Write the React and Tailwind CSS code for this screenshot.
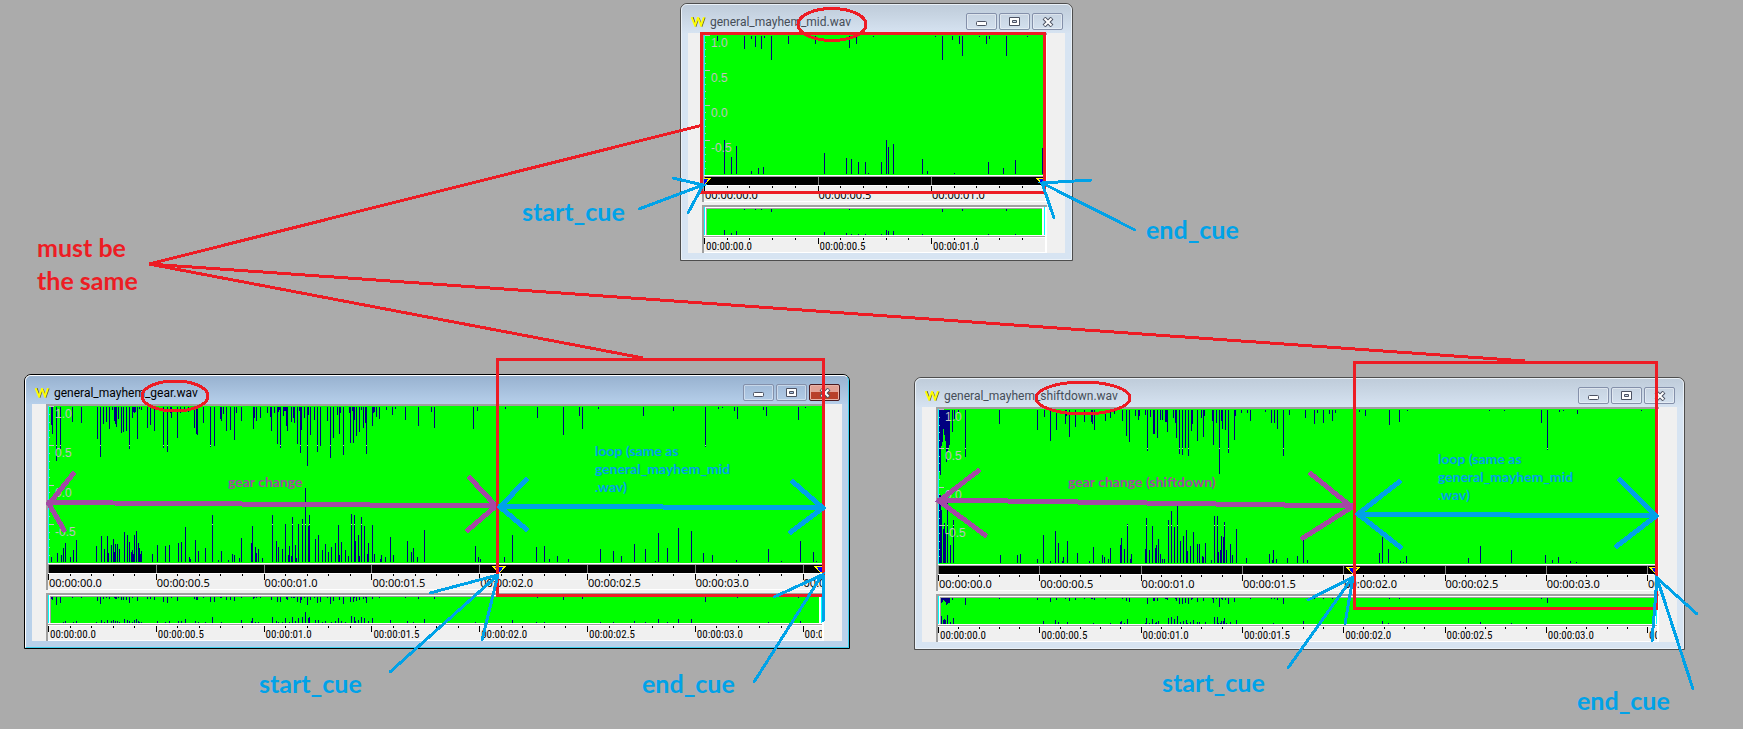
const midWave = {
  top: "13,5 40,13 47,3 51,11 57,13 60,2 67,24 84,8 111,8 145,12 152,8 169,1 231,1 238,24 248,4 255,8 258,20 275,1 282,8 285,3 302,20 323,1",
  bottom:
    "20,34 27,17 32,28 47,3 54,6 59,7 120,21 142,16 147,15 154,12 161,12 164,1 177,12 182,34 184,27 189,30 218,15 223,3 250,1 284,12 299,6 311,14 338,26",
};

const gearWave = {
  top: "3,18 4,27 8,54 12,42 24,15 33,16 49,32 52,50 55,17 58,15 61,22 64,3 66,14 67,17 68,20 70,12 73,26 75,25 78,24 81,42 84,11 85,5 86,6 87,5 89,32 91,2 93,3 99,21 102,18 106,24 109,3 115,41 119,45 122,6 123,11 129,31 132,6 136,4 140,5 146,21 148,27 149,28 155,16 162,40 166,39 172,12 173,14 175,7 178,24 182,23 186,33 188,6 193,14 205,22 206,11 208,14 212,11 219,6 222,10 223,24 226,6 229,37 230,5 231,3 232,41 235,9 236,4 237,4 238,19 239,24 243,15 245,11 246,16 249,37 251,4 252,46 253,23 256,11 259,59 260,8 262,28 266,13 269,45 272,39 279,14 282,51 285,31 289,8 291,27 292,6 295,48 301,6 302,36 304,4 305,36 306,13 308,29 311,25 313,3 315,21 317,16 318,47 324,19 325,6 326,5 328,10 331,12 338,3 344,8 347,2 357,13 370,19 383,5 386,21 425,22 429,4 457,2 489,11 515,28 531,9 534,22 550,2 595,9 625,4 657,40 670,2 674,1 686,4 689,12 715,3 718,9 750,13 757,1",
  bottom:
    "3,5 9,9 13,7 15,14 17,19 22,5 25,12 28,22 48,16 53,26 56,13 59,26 60,9 63,17 65,23 66,10 67,18 69,18 71,13 76,30 79,27 81,20 83,10 84,12 85,8 86,27 88,31 90,19 91,14 92,8 93,11 104,8 109,17 117,16 121,17 130,19 133,20 137,35 141,5 142,3 147,22 150,11 157,14 164,47 170,2 173,11 180,2 184,8 186,7 191,4 193,24 203,19 204,36 207,15 208,9 210,13 214,4 224,47 228,21 230,15 234,13 237,38 240,7 241,16 243,6 244,45 247,17 248,4 250,38 254,43 257,74 260,36 261,47 267,23 270,27 274,12 277,18 280,10 283,15 287,19 290,37 291,7 293,20 297,12 300,6 303,48 306,47 307,21 310,27 311,6 313,45 316,36 319,8 320,19 324,37 326,8 332,3 333,7 337,5 342,25 345,7 359,21 363,10 365,14 369,5 376,32 427,16 430,5 432,3 456,5 464,27 488,15 496,16 501,3 509,6 520,3 552,13 565,11 573,6 586,18 597,13 607,1 610,29 619,14 630,34 643,31 655,9 664,7 688,2 720,13 733,1 752,21 765,10 768,1",
};

const shiftWave = {
  top: "1,61 2,65 3,36 4,32 5,19 6,25 7,31 8,52 9,42 10,39 11,35 14,22 16,9 20,2 27,47 61,14 99,20 106,7 112,31 118,20 127,14 128,6 131,27 137,17 146,12 153,12 154,14 156,20 167,11 172,8 176,4 184,11 188,26 191,32 197,6 200,10 201,6 207,5 209,41 212,7 215,24 216,24 219,28 222,10 224,10 227,12 228,12 229,22 235,8 237,13 238,28 241,44 244,45 247,38 250,46 253,21 254,14 259,31 263,8 265,27 266,6 274,11 275,35 278,13 281,64 283,11 284,19 287,20 290,43 296,30 297,6 303,3 309,3 312,11 327,2 333,13 336,13 339,19 345,46 351,5 367,8 376,14 379,3 385,13 391,4 394,11 397,3 421,2 427,6 451,15 461,12 469,1 551,1 566,1 603,13 609,40 621,2 625,1 639,4 703,1",
  bottom:
    "1,68 2,68 3,53 5,34 6,40 7,30 9,62 12,18 15,43 62,8 79,8 82,9 99,4 105,28 112,2 117,32 120,20 124,2 125,6 129,22 139,10 151,2 155,16 164,8 166,6 170,4 172,15 182,18 183,25 186,14 189,39 192,4 193,9 207,14 208,45 211,13 214,37 217,15 218,18 220,24 222,9 224,4 226,4 230,43 233,52 236,36 239,57 242,22 245,27 248,33 249,12 252,17 255,31 259,19 261,19 264,7 265,6 267,20 273,3 276,47 279,47 280,11 282,13 283,27 285,26 286,41 288,13 292,19 294,8 298,34 308,5 331,9 334,3 335,13 338,4 349,5 359,7 365,24 369,3 441,10 444,26 450,14 462,2 465,1 468,7 530,5 542,17 573,13 607,8 614,3 620,6 632,2 638,1",
};

const parse = (list) => list.split(" ").map((pair) => pair.split(",").map(Number));

function Spikes({ wave, height, scale = 1, shift = 0 }) {
  const bars = [];
  const full = scale === 1;
  const size = (n) => (full ? n : Math.max(0, Math.floor(n * scale - 0.8)));
  const inset = full ? 1 : 0;
  parse(wave.top).forEach(([x, n]) => bars.push([x - shift, inset, size(n)]));
  parse(wave.bottom).forEach(([x, n]) =>
    bars.push([x - shift, height - size(n) - inset, size(n)])
  );
  return (
    <g fill="#000080">
      {bars.map(([x, y, h], i) => (
        <rect key={i} x={x} y={y} width="1" height={h} />
      ))}
    </g>
  );
}

function WaveView({ wave, height }) {
  const step = height / 4;
  const minors = Array.from({ length: 20 }, (_, i) => i);
  return (
    <div className="grid bg-[#00ff00]">
      <svg
        className="col-start-1 row-start-1 block w-full"
        height={height}
        shapeRendering="crispEdges"
        aria-hidden="true"
      >
        <Spikes wave={wave} height={height} />
        <rect x="0" y="0" width="1" height={height} fill="#00ffff" />
        {minors.map((i) => (
          <rect
            key={i}
            x="1"
            y={Math.round((i * step) / 5)}
            width={i % 5 === 0 ? 5 : 1}
            height="1"
            fill="#c0c0c0"
          />
        ))}
        {parse(wave.top)
          .filter(([, n]) => n >= step)
          .map(([x]) => (
            <rect key={"t" + x} x={x} y={Math.round(step)} width="1" height="1" fill="#c0c0c0" />
          ))}
        {parse(wave.bottom)
          .filter(([, n]) => n >= step)
          .map(([x]) => (
            <rect key={"b" + x} x={x} y={Math.round(step * 3)} width="1" height="1" fill="#c0c0c0" />
          ))}
      </svg>
      <ol className="col-start-1 row-start-1 grid grid-rows-4 pl-[7px] font-['Liberation_Sans'] text-xs leading-4 text-[#c0c0c0]">
        <li>1.0</li>
        <li>0.5</li>
        <li>0.0</li>
        <li>-0.5</li>
      </ol>
    </div>
  );
}

function CueBar({ step, cues }) {
  return (
    <svg className="block h-2 w-full bg-black" shapeRendering="crispEdges" aria-hidden="true">
      {Array.from({ length: 8 }, (_, i) => (
        <rect key={i} x={Math.round(i * step)} y="0" width="1" height="8" fill="#808080" />
      ))}
      {cues.map((x) => (
        <path key={x} d={`M${x - 6} 1.5H${x + 6}L${x} 8Z`} fill="#0000ff" stroke="#ffff00" />
      ))}
    </svg>
  );
}

function Ruler({ step, labels, small }) {
  const ticks = Array.from({ length: 40 }, (_, i) => i);
  return (
    <div className={small ? "grid h-[14px] overflow-x-clip" : "grid h-[15px] overflow-x-clip"}>
      <svg className="col-start-1 row-start-1 block h-[7px] w-full" shapeRendering="crispEdges" aria-hidden="true">
        {ticks.map((i) => (
          <rect
            key={i}
            x={Math.round((i * step) / 5)}
            y="0"
            width="1"
            height={i % 5 === 0 ? 6 : 2}
            fill="#000"
          />
        ))}
      </svg>
      <ol
        className={
          small
            ? "col-start-1 row-start-1 flex min-w-0 pt-[3px] pl-[2px] font-['Roboto_Condensed','Roboto',sans-serif] text-[11px] leading-3 text-black"
            : "col-start-1 row-start-1 flex min-w-0 pt-[3px] pl-px font-['Noto_Sans',sans-serif] text-[11px] leading-3 text-black"
        }
      >
        {labels.map((label) => (
          <li key={label} className="shrink-0" style={{ width: step }}>
            {label}
          </li>
        ))}
      </ol>
    </div>
  );
}

function Overview({ wave, height }) {
  return (
    <div className="flex h-[28px] border-x border-[#00ffff] bg-white pl-px pr-[2px] pt-px">
      <div className="min-w-0 flex-1 border-l border-t border-[#a0a0a0] bg-[#00ff00]">
        <svg className="block h-[26px] w-full" shapeRendering="crispEdges" aria-hidden="true">
          <Spikes wave={wave} height={26} scale={26 / height} shift={3} />
        </svg>
      </div>
    </div>
  );
}

function TitleButton({ label, danger, children }) {
  return (
    <button
      type="button"
      aria-label={label}
      className={
        danger
          ? "flex h-[17px] w-[31px] items-center justify-center rounded-[2px] border border-[#4a1a20] bg-linear-to-b from-[#e2a195] from-50% to-[#b8402a] to-50% shadow-[inset_0_0_0_1px_#e8b3a8]"
          : "flex h-[17px] w-[31px] items-center justify-center rounded-[2px] border border-[#8490aa] shadow-[inset_0_0_0_1px_#ffffff66]"
      }
    >
      {children}
    </button>
  );
}

function TitleBar({ title, active }) {
  return (
    <header
      className={
        active
          ? "flex h-[28px] items-start rounded-t-[5px] bg-linear-to-b from-[#98b2d0] to-[#b6cfea] pl-[9px] pr-2 text-black"
          : "flex h-[28px] items-start rounded-t-[5px] bg-linear-to-b from-[#bfccda] to-[#d6e3f1] pl-[9px] pr-2 text-[#454d57]"
      }
    >
      <svg className="mt-3 block h-[10px] w-[15px]" viewBox="1 0 15 10" aria-hidden="true">
        <path d="M3 0L6 9L8.500 1.500M9 1L12 9L15 0.500" fill="none" stroke="#6b6b2e" strokeWidth="1.200" />
        <path d="M1.500 0L5 8.500L8 0.500L11 8.500L14 0" fill="none" stroke="#ffff00" strokeWidth="1.800" />
      </svg>
      <h2 className="mt-2 ml-1 flex-1 font-['Roboto',sans-serif] text-xs leading-[18px]">{title}</h2>
      <div className="mt-2 flex gap-[2px]">
        <TitleButton label="Minimize">
          <svg width="11" height="9" viewBox="0 0 11 9" aria-hidden="true">
            <rect x="0.5" y="4.5" width="10" height="4" rx="1" fill="#fff" stroke="#4c5262" />
          </svg>
        </TitleButton>
        <TitleButton label="Maximize">
          <svg width="11" height="9" viewBox="0 0 11 9" aria-hidden="true">
            <path d="M0.5 0.5H10.5V8.5H0.5Z M3.5 3.5V5.5H7.5V3.5Z" fillRule="evenodd" fill="#fff" stroke="#4c5262" />
          </svg>
        </TitleButton>
        <TitleButton label="Close" danger={active}>
          <svg width="12" height="10" viewBox="0 0 12 10" aria-hidden="true">
            <path d="M2 1L10 9M10 1L2 9" stroke="#4c5262" strokeWidth="4" />
            <path d="M2.5 1.5L9.5 8.5M9.5 1.5L2.5 8.5" stroke="#fff" strokeWidth="2" />
          </svg>
        </TitleButton>
      </div>
    </header>
  );
}

function WaveWindow({ place, title, active, wave, height, step, labels, cues }) {
  return (
    <section
      aria-label={title}
      className={`absolute rounded-t-[7px] border ${active ? "border-black" : "border-[#4d4d4d]"} ${place}`}
    >
      <div
        className={
          active
            ? "rounded-t-[6px] border border-t-white border-l-white border-r-[#3ed0ee] border-b-[#3ed0ee] bg-[#b9d1ea]"
            : "rounded-t-[6px] border border-[#eaf1f8] bg-[#d7e4f2]"
        }
      >
        <TitleBar title={title} active={active} />
        <div className="mx-[6px] mb-[6px] bg-[#f0f0f0] pl-[14px] pr-[18px]">
          <div className="border-t-2 border-l-2 border-[#a0a0a0]">
            <div className="border-r-2 border-b border-white">
              <WaveView wave={wave} height={height} />
              <div className="border-t border-b border-t-white border-b-white bg-[#a0a0a0] pt-px">
                <CueBar step={step} cues={cues} />
              </div>
              <Ruler step={step} labels={labels} />
            </div>
          </div>
          <div className="mt-[3px] border-t-2 border-l-2 border-[#a0a0a0]">
            <div className="border-r-2 border-b border-white">
              <Overview wave={wave} height={height} />
              <div className="border-t border-b border-white bg-[#a0a0a0] pt-px" />
              <Ruler step={step} labels={labels} small />
            </div>
          </div>
        </div>
      </div>
    </section>
  );
}

const times = [
  "00:00:00.0",
  "00:00:00.5",
  "00:00:01.0",
  "00:00:01.5",
  "00:00:02.0",
  "00:00:02.5",
  "00:00:03.0",
  "00:00:03.5",
];

function Markup() {
  return (
    <svg
      className="pointer-events-none absolute top-0 left-0 h-full w-full"
      fill="none"
      shapeRendering="crispEdges"
      aria-hidden="true"
    >
      <g stroke="#a349a4" strokeWidth="5" strokeLinecap="round">
        <path d="M49 502.500L497 506M73 474L49 504L64 530M470 478L496 506L468 530" />
        <path d="M939 500L1353 506M978 471L939 501L985 535M1311 474L1352 507L1303 538" />
      </g>
      <g stroke="#ed1c24" strokeWidth="3">
        <path d="M703 125L149 264L643 358M149 264L1525 361" strokeLinejoin="bevel" />
        <rect x="701.5" y="33.5" width="343" height="159" />
        <rect x="497.5" y="359.5" width="326" height="236" />
        <rect x="1354.5" y="362.5" width="302" height="246" />
        <ellipse cx="832" cy="24.500" rx="34" ry="16" />
        <ellipse cx="175" cy="396" rx="33" ry="15" />
        <ellipse cx="1083" cy="398" rx="47" ry="16" />
      </g>
      <g stroke="#00a2e8" strokeWidth="5" strokeLinecap="round">
        <path d="M500 506L823 508M526 480L500 507L526 529M793 482L823 508L791 532" />
        <path d="M1360 514L1656 516M1399 482L1358 514L1400 547M1620 480L1656 516L1617 546" />
      </g>
      <g stroke="#00a2e8" strokeWidth="3" strokeLinecap="round">
        <path d="M639 209L703 185L673 178M703 185L688 213" />
        <path d="M1135 230L1042 183L1091 180M1042 183L1054 218" />
        <path d="M390 672L498 575L430 593M498 575L482 640" />
        <path d="M754 682L822 575L774 597M823 575V621" />
        <path d="M1288 668L1353 577L1308 600M1353 577L1345 624" />
        <path d="M1693 689L1657 578L1697 614M1657 578L1652 641" />
      </g>
    </svg>
  );
}

export default function App() {
  const big = "absolute font-['Lato',sans-serif] text-[25px] leading-[33px] font-bold";
  const note = "absolute font-['Lato',sans-serif] text-sm leading-[18px] font-bold";
  return (
    <main className="relative min-h-screen w-full overflow-hidden bg-[#ababab]">
      <WaveWindow
        place="left-[680px] top-[3px] w-[393px]"
        title="general_mayhem_mid.wav"
        wave={midWave}
        height={140}
        step={113.5}
        labels={times.slice(0, 3)}
        cues={[0, 339]}
      />
      <WaveWindow
        place="left-[24px] top-[374px] w-[826px]"
        title="general_mayhem_gear.wav"
        active
        wave={gearWave}
        height={157}
        step={107.8}
        labels={times}
        cues={[451, 773]}
      />
      <WaveWindow
        place="left-[914px] top-[377px] w-[771px]"
        title="general_mayhem_shiftdown.wav"
        wave={shiftWave}
        height={155}
        step={101.3}
        labels={times}
        cues={[415, 718]}
      />
      <p className={`${note} left-[228px] top-[473px] text-[#a349a4]`}>gear change</p>
      <p className={`${note} left-[1068px] top-[473px] text-[#a349a4]`}>gear change (shiftdown)</p>
      <p className={`${note} left-[595px] top-[442px] text-[#00a2e8]`}>
        loop (same as
        <br />
        general_mayhem_mid
        <br />
        .wav)
      </p>
      <p className={`${note} left-[1438px] top-[450px] text-[#00a2e8]`}>
        loop (same as
        <br />
        general_mayhem_mid
        <br />
        .wav)
      </p>
      <Markup />
      <p className={`${big} left-[37px] top-[231px] text-[#ed1c24]`}>
        must be
        <br />
        the same
      </p>
      <p className={`${big} left-[522px] top-[195px] text-[#00a2e8]`}>start_cue</p>
      <p className={`${big} left-[1146px] top-[213px] text-[#00a2e8]`}>end_cue</p>
      <p className={`${big} left-[259px] top-[667px] text-[#00a2e8]`}>start_cue</p>
      <p className={`${big} left-[642px] top-[667px] text-[#00a2e8]`}>end_cue</p>
      <p className={`${big} left-[1162px] top-[666px] text-[#00a2e8]`}>start_cue</p>
      <p className={`${big} left-[1577px] top-[684px] text-[#00a2e8]`}>end_cue</p>
    </main>
  );
}
